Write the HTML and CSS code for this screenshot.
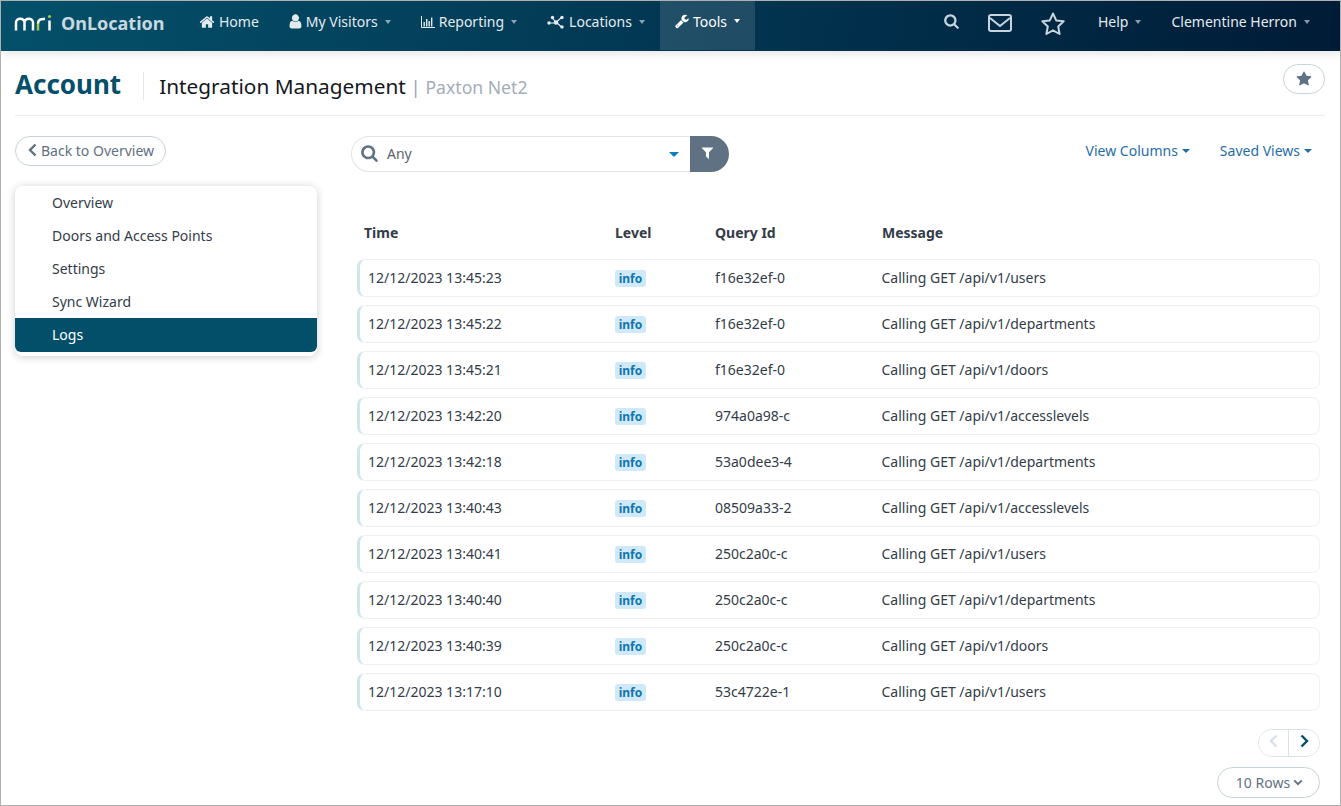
FILE: index.html
```html
<!DOCTYPE html>
<html lang="en">

<head>
    <meta charset="UTF-8">
    <meta name="viewport" content="width=device-width, initial-scale=1.0">
    <title>Integration Management</title>
    <link rel="stylesheet" href="styles.css">
</head>

<body>
    <div class="window">
        <nav class="navbar">
            <a class="brand">
                <svg class="logo" viewBox="0 0 38 18" width="38" height="18">
                    <path d="M2 16.5V8.5C2 3.5 10.5 3.5 10.5 8.5V16.5M10.5 8.5C10.5 3.5 19 3.5 19 8.5V16.5" fill="none" stroke="#fff" stroke-width="2.5"/>
                    <path d="M24 16.5V9" fill="none" stroke="#a4c94a" stroke-width="2.5"/>
                    <path d="M24 9.5C24 5.5 27 4.6 31 5" fill="none" stroke="#fff" stroke-width="2.5"/>
                    <path d="M35.5 16.5V6.5" fill="none" stroke="#fff" stroke-width="2.5"/>
                    <circle cx="35.5" cy="2.5" r="1.6" fill="#a4c94a"/>
                </svg>
                <span class="brand-name">OnLocation</span>
            </a>
            <a class="nav-item">
                <svg class="nav-icon" viewBox="0 0 1792 1792" width="16" height="16"><path d="M1472 992v480q0 26-19 45t-45 19h-384v-384h-256v384h-384q-26 0-45-19t-19-45v-480q0-1 .5-3t.5-3l575-474 575 474q1 2 1 6zm223-69l-62 74q-8 9-21 11h-3q-13 0-21-7l-692-577-692 577q-12 8-24 7-13-2-21-11l-62-74q-8-10-7-23.5t11-21.5l719-599q32-26 76-26t76 26l244 204v-195q0-14 9-23t23-9h192q14 0 23 9t9 23v408l219 182q10 8 11 21.5t-7 23.5z"/></svg>
                <span>Home</span>
            </a>
            <a class="nav-item">
                <svg class="nav-icon" viewBox="200 100 1400 1600" width="13" height="15"><path d="M1536 1399q0 109-62.5 187t-150.5 78h-854q-88 0-150.5-78t-62.5-187q0-85 8.5-160.5t31.5-152 58.5-131 94-89 134.5-34.5q131 128 313 128t313-128q76 0 134.5 34.5t94 89 58.5 131 31.5 152 8.5 160.5zm-256-887q0 159-112.5 271.5t-271.5 112.5-271.5-112.5-112.5-271.5 112.5-271.5 271.5-112.5 271.5 112.5 112.5 271.5z"/></svg>
                <span>My Visitors</span><span class="caret"></span>
            </a>
            <a class="nav-item">
                <svg class="nav-icon" viewBox="0 0 14 12" width="14" height="12"><path d="M.5 0v11.5H14" fill="none" stroke="currentColor"/><path d="M2.5 6h1.4v4.5H2.5zM5 3h1.4v7.5H5zM7.5 5h1.4v5.5H7.5zM10 1.5h1.4v9H10z"/></svg>
                <span>Reporting</span><span class="caret"></span>
            </a>
            <a class="nav-item">
                <svg class="nav-icon" viewBox="0 0 18 14" width="18" height="14"><path d="M2 8H7.5M5.5 3L9 7.5M14.5 2.5L9.5 7M9.5 7.5L14.5 12" fill="none" stroke="currentColor" stroke-width="1.2"/><circle cx="2" cy="8" r="1.7"/><circle cx="5.5" cy="2.5" r="1.7"/><circle cx="9" cy="7.5" r="2.2"/><circle cx="15" cy="2.5" r="1.7"/><circle cx="15" cy="12" r="1.7"/></svg>
                <span>Locations</span><span class="caret"></span>
            </a>
            <a class="nav-item active">
                <svg class="nav-icon" viewBox="50 120 1700 1650" width="14" height="15"><path d="M448 1472q0-26-19-45t-45-19-45 19-19 45 19 45 45 19 45-19 19-45zm644-420l-682 682q-37 37-90 37-52 0-91-37l-106-108q-38-36-38-90 0-53 38-91l681-681q39 98 114.5 173.5t173.5 114.5zm634-435q0 39-23 106-47 134-164.5 217.5t-258.5 83.5q-185 0-316.5-131.5t-131.5-316.5 131.5-316.5 316.5-131.5q58 0 121.5 16.5t107.5 46.5q16 11 16 28t-16 28l-293 169v224l193 107q5-3 79-48.5t135.5-81 70.5-35.5q15 0 23.5 10t8.5 25z"/></svg>
                <span>Tools</span><span class="caret"></span>
            </a>

            <div class="nav-right">
                <a class="nav-tool search-tool">
                    <svg viewBox="50 100 1700 1700" width="15" height="15"><path d="M1216 832q0-185-131.5-316.5t-316.5-131.5-316.5 131.5-131.5 316.5 131.5 316.5 316.5 131.5 316.5-131.5 131.5-316.5zm512 832q0 52-38 90t-90 38q-54 0-90-38l-343-342q-179 124-399 124-143 0-273.5-55.5t-225-150-150-225-55.5-273.5 55.5-273.5 150-225 225-150 273.5-55.5 273.5 55.5 225 150 150 225 55.5 273.5q0 220-124 399l343 343q37 37 37 90z"/></svg>
                </a>
                <a class="nav-tool mail-tool">
                    <svg viewBox="0 0 24 20" width="24" height="20"><rect x="1" y="2" width="22" height="16" rx="2" fill="none" stroke="currentColor" stroke-width="2"/><path d="M2 5l10 8 10-8" fill="none" stroke="currentColor" stroke-width="2"/></svg>
                </a>
                <a class="nav-tool star-tool">
                    <svg viewBox="0 0 26 26" width="26" height="26"><path d="M13 2.5l3.2 6.9 7.5.9-5.5 5.2 1.4 7.5-6.6-3.7-6.6 3.7 1.4-7.5-5.5-5.2 7.5-.9z" fill="none" stroke="currentColor" stroke-width="2" stroke-linejoin="round"/></svg>
                </a>
                <a class="nav-item"><span>Help</span><span class="caret"></span></a>
                <a class="nav-item"><span>Clementine Herron</span><span class="caret"></span></a>
            </div>
        </nav>

        <header class="page-head">
            <h1>Account</h1>
            <h2>Integration Management</h2>
            <span class="head-sep">|</span>
            <span class="head-sub">Paxton Net2</span>
            <button class="fav-button">
                <svg viewBox="0 0 1792 1792" width="16" height="16"><path d="M1728 647q0 22-26 48l-363 354 86 500q1 7 1 20 0 21-10.5 35.5t-30.5 14.5q-19 0-40-12l-449-236-449 236q-22 12-40 12-21 0-31.5-14.5t-10.5-35.5q0-6 2-20l86-500-364-354q-25-27-25-48 0-37 56-46l502-73 225-455q19-41 49-41t49 41l225 455 502 73q56 9 56 46z"/></svg>
            </button>
        </header>

        <div class="content">
            <aside class="sidebar">
                <button class="back-button">
                    <svg viewBox="0 0 9 14" width="9" height="14"><path d="M7.5 1.5L2 7l5.5 5.5" fill="none" stroke="currentColor" stroke-width="2.4"/></svg>
                    <span>Back to Overview</span>
                </button>
                <ul class="side-menu">
                    <li>Overview</li>
                    <li>Doors and Access Points</li>
                    <li>Settings</li>
                    <li>Sync Wizard</li>
                    <li class="selected">Logs</li>
                </ul>
            </aside>

            <main class="main">
                <div class="toolbar">
                    <div class="filter-group">
                        <div class="filter-input">
                            <svg viewBox="50 100 1700 1700" width="17" height="17"><path d="M1216 832q0-185-131.5-316.5t-316.5-131.5-316.5 131.5-131.5 316.5 131.5 316.5 316.5 131.5 316.5-131.5 131.5-316.5zm512 832q0 52-38 90t-90 38q-54 0-90-38l-343-342q-179 124-399 124-143 0-273.5-55.5t-225-150-150-225-55.5-273.5 55.5-273.5 150-225 225-150 273.5-55.5 273.5 55.5 225 150 150 225 55.5 273.5q0 220-124 399l343 343q37 37 37 90z"/></svg>
                            <span class="filter-value">Any</span>
                            <span class="filter-caret"></span>
                        </div>
                        <button class="filter-button">
                            <svg viewBox="100 200 1600 1500" width="13" height="12"><path d="M1595 295q17 41-14 70l-493 493v742q0 42-39 59-13 5-25 5-27 0-45-19l-256-256q-19-19-19-45v-486l-493-493q-31-29-14-70 17-39 59-39h1280q42 0 59 39z"/></svg>
                        </button>
                    </div>
                    <div class="view-links">
                        <a>View Columns<span class="caret"></span></a>
                        <a>Saved Views<span class="caret"></span></a>
                    </div>
                </div>

                <div class="log-table">
                    <div class="log-head">
                        <span>Time</span>
                        <span>Level</span>
                        <span>Query Id</span>
                        <span>Message</span>
                    </div>
                    <div class="log-row">
                        <span>12/12/2023 13:45:23</span>
                        <span><b class="badge">info</b></span>
                        <span>f16e32ef-0</span>
                        <span>Calling GET /api/v1/users</span>
                    </div>
                    <div class="log-row">
                        <span>12/12/2023 13:45:22</span>
                        <span><b class="badge">info</b></span>
                        <span>f16e32ef-0</span>
                        <span>Calling GET /api/v1/departments</span>
                    </div>
                    <div class="log-row">
                        <span>12/12/2023 13:45:21</span>
                        <span><b class="badge">info</b></span>
                        <span>f16e32ef-0</span>
                        <span>Calling GET /api/v1/doors</span>
                    </div>
                    <div class="log-row">
                        <span>12/12/2023 13:42:20</span>
                        <span><b class="badge">info</b></span>
                        <span>974a0a98-c</span>
                        <span>Calling GET /api/v1/accesslevels</span>
                    </div>
                    <div class="log-row">
                        <span>12/12/2023 13:42:18</span>
                        <span><b class="badge">info</b></span>
                        <span>53a0dee3-4</span>
                        <span>Calling GET /api/v1/departments</span>
                    </div>
                    <div class="log-row">
                        <span>12/12/2023 13:40:43</span>
                        <span><b class="badge">info</b></span>
                        <span>08509a33-2</span>
                        <span>Calling GET /api/v1/accesslevels</span>
                    </div>
                    <div class="log-row">
                        <span>12/12/2023 13:40:41</span>
                        <span><b class="badge">info</b></span>
                        <span>250c2a0c-c</span>
                        <span>Calling GET /api/v1/users</span>
                    </div>
                    <div class="log-row">
                        <span>12/12/2023 13:40:40</span>
                        <span><b class="badge">info</b></span>
                        <span>250c2a0c-c</span>
                        <span>Calling GET /api/v1/departments</span>
                    </div>
                    <div class="log-row">
                        <span>12/12/2023 13:40:39</span>
                        <span><b class="badge">info</b></span>
                        <span>250c2a0c-c</span>
                        <span>Calling GET /api/v1/doors</span>
                    </div>
                    <div class="log-row">
                        <span>12/12/2023 13:17:10</span>
                        <span><b class="badge">info</b></span>
                        <span>53c4722e-1</span>
                        <span>Calling GET /api/v1/users</span>
                    </div>
                </div>

                <div class="table-foot">
                    <div class="pager">
                        <button class="pager-button prev">
                            <svg viewBox="0 0 9 14" width="9" height="14"><path d="M7.5 1.5L2 7l5.5 5.5" fill="none" stroke="currentColor" stroke-width="2.4"/></svg>
                        </button>
                        <button class="pager-button next">
                            <svg viewBox="0 0 9 14" width="9" height="14"><path d="M1.5 1.5L7 7l-5.5 5.5" fill="none" stroke="currentColor" stroke-width="2.4"/></svg>
                        </button>
                    </div>
                    <button class="rows-button">
                        <span>10 Rows</span>
                        <svg viewBox="0 0 12 8" width="10" height="7"><path d="M1.5 1.5L6 6l4.5-4.5" fill="none" stroke="currentColor" stroke-width="2.4"/></svg>
                    </button>
                </div>
            </main>
        </div>
    </div>
</body>

</html>
```

FILE: styles.css
```css
* {
    box-sizing: border-box;
}

body {
    margin: 0;
    font-family: "Noto Sans", "Open Sans", Arial, sans-serif;
    font-size: 14px;
    color: #333c48;
    background-color: #fff;
}

button {
    font-family: inherit;
    cursor: pointer;
}

.window {
    width: 1341px;
    height: 806px;
    border: 1px solid #b0b0b0;
    overflow: hidden;
    background-color: #fff;
}

.navbar {
    display: flex;
    align-items: stretch;
    height: 50px;
    background: linear-gradient(100deg, #04506a 0%, #033f5a 35%, #012c48 70%, #001b36 100%);
    color: #e4ebef;
    box-shadow: 0 2px 10px rgba(0, 0, 0, 0.12);
    position: relative;
}

.brand {
    display: flex;
    align-items: center;
    width: 183px;
    padding: 0 0 7px 13px;
}

.logo {
    flex-shrink: 0;
}

.brand-name {
    margin-left: 9px;
    font-size: 18px;
    font-weight: 700;
    color: #c8d8df;
}

.nav-item {
    display: flex;
    align-items: center;
    padding: 0 15px 9px;
    font-weight: 400;
    white-space: nowrap;
}

.nav-icon {
    fill: currentColor;
    margin-right: 4px;
}

.caret {
    display: inline-block;
    width: 0;
    height: 0;
    margin-left: 7px;
    border-top: 4px solid currentColor;
    border-left: 3.5px solid transparent;
    border-right: 3.5px solid transparent;
    opacity: 0.6;
}

.active {
    background-color: rgba(255, 255, 255, 0.12);
    color: #fff;
    margin-bottom: 1px;
}

.active .caret {
    opacity: 1;
}

.nav-right {
    display: flex;
    align-items: stretch;
    margin-left: auto;
    padding-right: 15px;
}

.nav-tool {
    display: flex;
    align-items: center;
    padding-bottom: 7px;
    color: #c9d5dc;
    fill: currentColor;
}

.search-tool {
    margin-right: 29px;
    padding-bottom: 9px;
}

.mail-tool {
    margin-right: 28px;
}

.star-tool {
    margin-right: 17px;
    padding-bottom: 5px;
}

.page-head {
    display: flex;
    align-items: baseline;
    position: relative;
    height: 65px;
    margin: 0 15px 0 14px;
    padding-top: 15px;
    border-bottom: 1px solid #e9ecee;
}

.page-head h1 {
    margin: 0;
    padding-right: 22px;
    font-size: 26px;
    line-height: 36px;
    font-weight: 700;
    color: #04506a;
}

.page-head h2 {
    margin: 0;
    padding-left: 15px;
    border-left: 1px solid #e3e7ea;
    font-size: 20.8px;
    line-height: 28px;
    font-weight: 400;
    color: #14181d;
}

.head-sep {
    margin: 0 5px;
    font-size: 17.6px;
    color: #8ea3b8;
}

.head-sub {
    font-size: 17.6px;
    color: #a3adb8;
}

.fav-button {
    position: absolute;
    right: 0;
    top: 13px;
    width: 42px;
    height: 30px;
    padding: 0;
    border: 1px solid #c8d3d8;
    border-radius: 15px;
    background-color: #fff;
    fill: #5f7183;
}

.fav-button svg {
    display: block;
    margin: 0 auto;
}

.content {
    display: flex;
    padding: 20px 20px 0 14px;
}

.sidebar {
    width: 302px;
    flex-shrink: 0;
}

.back-button {
    display: flex;
    align-items: center;
    gap: 4px;
    width: 151px;
    height: 30px;
    padding: 0 0 2px 12px;
    border: 1px solid #c8d3d8;
    border-radius: 15px;
    background-color: #fff;
    font-size: 14px;
    color: #5f7183;
}

.side-menu {
    list-style: none;
    margin: 20px 0 0;
    padding: 0 0 4px;
    border-radius: 8px;
    background-color: #fff;
    box-shadow: 0 1px 8px rgba(0, 0, 0, 0.2);
}

.side-menu li {
    height: 33px;
    padding-left: 37px;
    line-height: 33px;
    color: #333c48;
}

.side-menu .selected {
    height: 34px;
    line-height: 34px;
    border-radius: 0 0 6px 6px;
    background-color: #034f69;
    color: #fff;
}

.main {
    flex: 1;
    padding-left: 34px;
}

.toolbar {
    display: flex;
    justify-content: space-between;
    align-items: flex-start;
}

.filter-group {
    display: flex;
    width: 378px;
    height: 36px;
}

.filter-input {
    display: flex;
    align-items: center;
    flex: 1;
    padding: 0 11px 2px 9px;
    border: 1px solid #dfe5e8;
    border-right: none;
    border-radius: 18px 0 0 18px;
    fill: #5f7183;
}

.filter-value {
    margin-left: 9px;
    color: #5b6470;
}

.filter-caret {
    margin-left: auto;
    margin-top: 2px;
    border-top: 5px solid #0a7fc0;
    border-left: 5px solid transparent;
    border-right: 5px solid transparent;
}

.filter-button {
    width: 39px;
    padding: 0 4px 0 0;
    border: none;
    border-radius: 0 18px 18px 0;
    background-color: #5f7183;
    fill: #fff;
}

.view-links {
    display: flex;
    gap: 30px;
    padding: 5px 8px 0 0;
    color: #1f6ea8;
}

.view-links a {
    display: flex;
    align-items: center;
}

.view-links .caret {
    margin-left: 4px;
    border-left-width: 4px;
    border-right-width: 4px;
    opacity: 1;
}

.log-table {
    margin-top: 43px;
    margin-left: 6px;
}

.log-head,
.log-row {
    display: grid;
    grid-template-columns: 247px 100px 166.5px 1fr;
    align-items: center;
}

.log-head {
    grid-template-columns: 251px 100px 167px 1fr;
    height: 34px;
    padding-left: 7px;
    margin-bottom: 10px;
    font-weight: 700;
    color: #333c48;
}

.log-row {
    height: 38px;
    margin-bottom: 8px;
    padding-left: 8px;
    border: 1px solid #eef1f3;
    border-left: 3px solid #cfe6ea;
    border-radius: 8px;
    padding-bottom: 1px;
}

.badge {
    display: inline-block;
    width: 31px;
    border-radius: 3px;
    background-color: #cfe9f9;
    font-size: 12px;
    line-height: 17px;
    font-weight: 700;
    text-align: center;
    color: #0e76b0;
}

.table-foot {
    display: flex;
    flex-direction: column;
    align-items: flex-end;
    gap: 10px;
    margin-top: 18px;
}

.pager {
    display: flex;
    height: 28px;
    border: 1px solid #dbe2e5;
    border-radius: 14px;
    overflow: hidden;
}

.pager-button {
    width: 30px;
    padding: 0;
    border: none;
    background-color: #fff;
}

.pager-button.prev {
    color: #d8e2e6;
    border-right: 1px solid #dbe2e5;
}

.pager-button.next {
    color: #04506a;
}

.rows-button {
    display: flex;
    align-items: center;
    justify-content: center;
    gap: 3px;
    width: 103px;
    height: 31px;
    padding: 0 0 0 2px;
    border: 1px solid #c8d3d8;
    border-radius: 16px;
    background-color: #fff;
    font-size: 14px;
    color: #5f7183;
}
```
